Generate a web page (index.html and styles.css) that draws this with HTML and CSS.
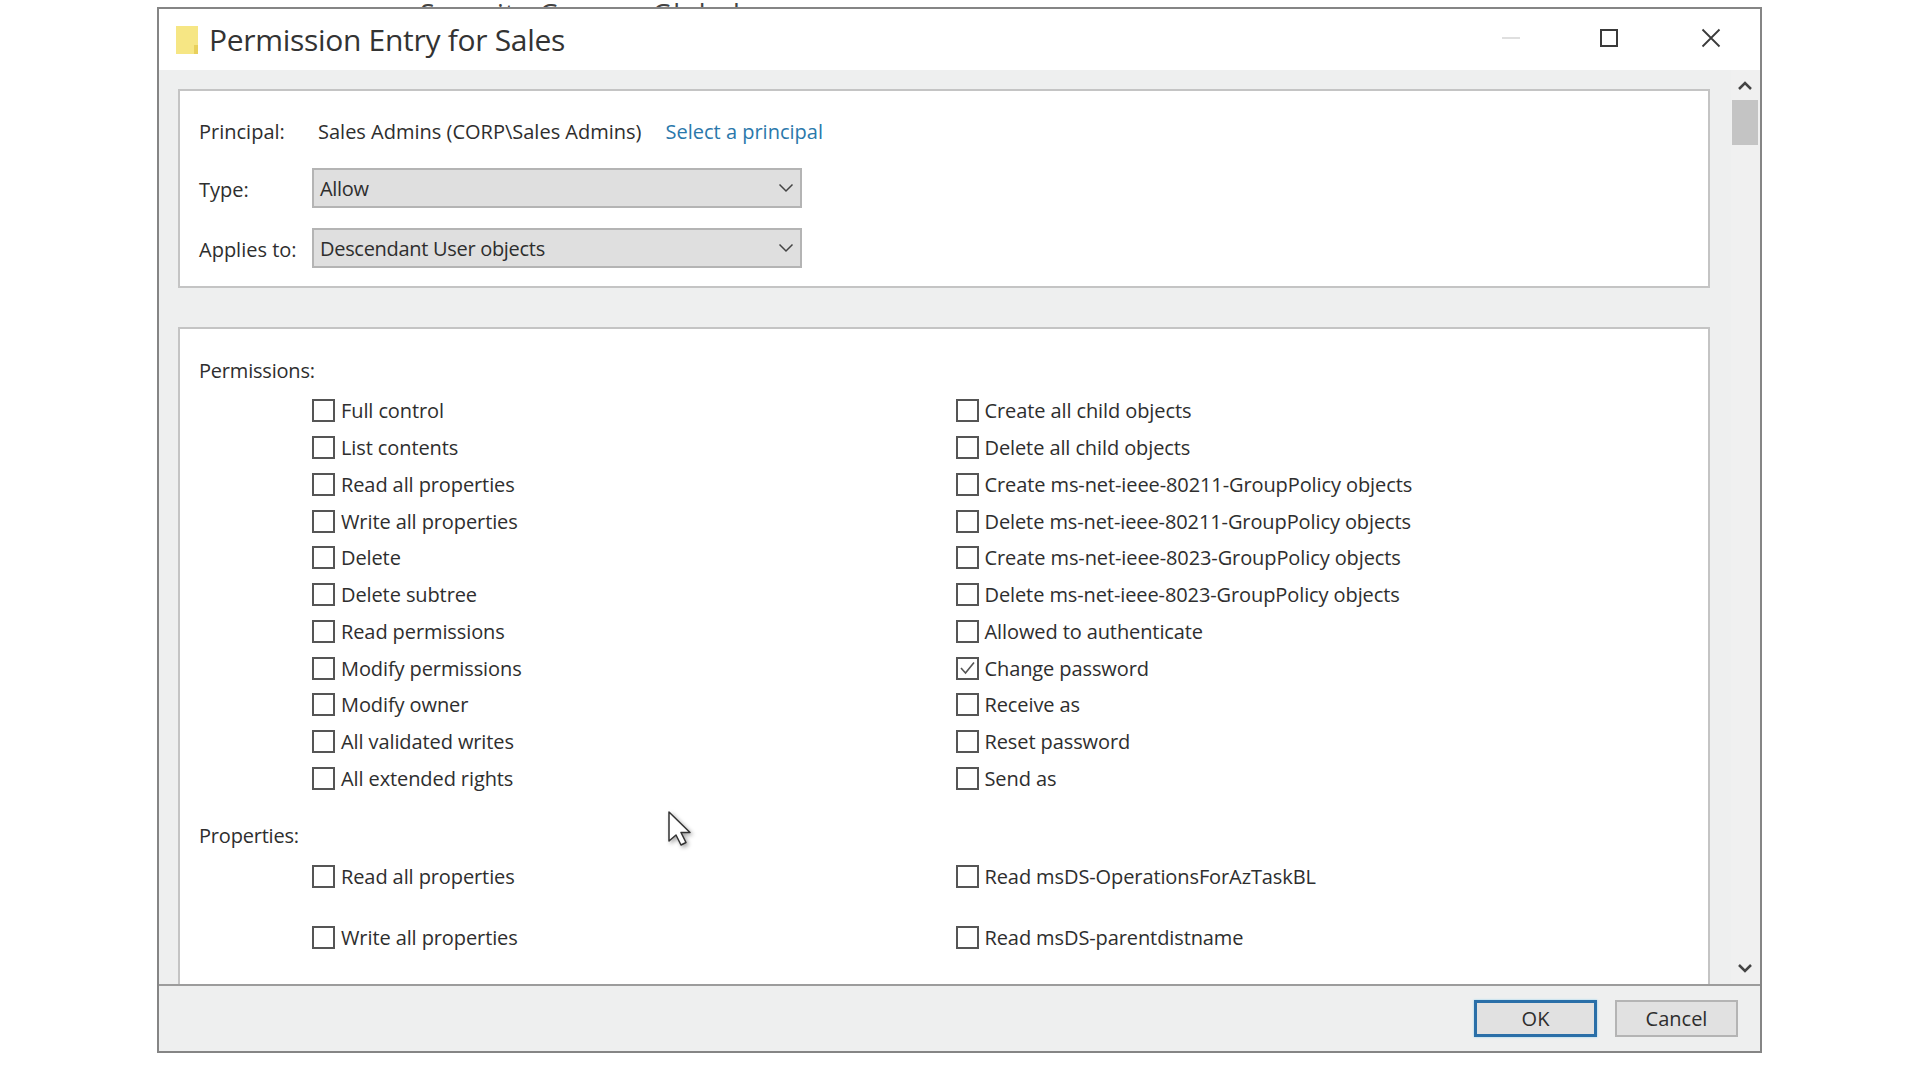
FILE: index.html
```html
<!DOCTYPE html>
<html lang="en">
<head>
<meta charset="utf-8">
<title>Permission Entry for Sales</title>
<link rel="stylesheet" href="styles.css">
</head>
<body>
<div class="behind">Security Group - Global</div>
<div class="window">
  <header class="titlebar">
    <svg class="folder" width="24" height="30" viewBox="0 0 24 30"><rect x="1" y="1" width="22" height="28" fill="#f6e684"/><rect x="19" y="20" width="4" height="9" fill="#e8d05c"/></svg>
    <span class="title">Permission Entry for Sales</span>
    <div class="controls">
      <svg class="ctl" width="24" height="24" viewBox="0 0 24 24"><path d="M3 12h18" stroke="#d4d4d4" stroke-width="1.500"/></svg>
      <svg class="ctl" width="24" height="24" viewBox="0 0 24 24"><rect x="4" y="4" width="16" height="16" fill="none" stroke="#3a3a3a" stroke-width="2"/></svg>
      <svg class="ctl" width="24" height="24" viewBox="0 0 24 24"><path d="M3.500 3.500l17 17M20.500 3.500l-17 17" stroke="#3a3a3a" stroke-width="1.800" fill="none"/></svg>
    </div>
  </header>
  <div class="body">
    <main class="content">
      <section class="panel top">
        <div class="row principal"><span class="lbl">Principal:</span><span class="val">Sales Admins (CORP\Sales Admins)</span><span class="link">Select a principal</span></div>
        <div class="row"><span class="lbl field">Type:</span><div class="select"><span>Allow</span><svg width="16" height="10" viewBox="0 0 16 10"><path d="M1.500 1.500L8 8l6.500-6.500" fill="none" stroke="#444" stroke-width="1.500"/></svg></div></div>
        <div class="row"><span class="lbl field">Applies to:</span><div class="select"><span>Descendant User objects</span><svg width="16" height="10" viewBox="0 0 16 10"><path d="M1.500 1.500L8 8l6.500-6.500" fill="none" stroke="#444" stroke-width="1.500"/></svg></div></div>
      </section>
      <section class="panel perms">
        <div class="head">Permissions:</div>
        <div class="grid">
          <label class="cb"><i></i>Full control</label><label class="cb"><i></i>Create all child objects</label>
          <label class="cb"><i></i>List contents</label><label class="cb"><i></i>Delete all child objects</label>
          <label class="cb"><i></i>Read all properties</label><label class="cb"><i></i>Create ms-net-ieee-80211-GroupPolicy objects</label>
          <label class="cb"><i></i>Write all properties</label><label class="cb"><i></i>Delete ms-net-ieee-80211-GroupPolicy objects</label>
          <label class="cb"><i></i>Delete</label><label class="cb"><i></i>Create ms-net-ieee-8023-GroupPolicy objects</label>
          <label class="cb"><i></i>Delete subtree</label><label class="cb"><i></i>Delete ms-net-ieee-8023-GroupPolicy objects</label>
          <label class="cb"><i></i>Read permissions</label><label class="cb"><i></i>Allowed to authenticate</label>
          <label class="cb"><i></i>Modify permissions</label><label class="cb"><i><svg width="19" height="19" viewBox="0 0 19 19"><path d="M3 9l4.500 5L16 3.500" fill="none" stroke="#555" stroke-width="1.600"/></svg></i>Change password</label>
          <label class="cb"><i></i>Modify owner</label><label class="cb"><i></i>Receive as</label>
          <label class="cb"><i></i>All validated writes</label><label class="cb"><i></i>Reset password</label>
          <label class="cb"><i></i>All extended rights</label><label class="cb"><i></i>Send as</label>
        </div>
        <div class="head props">Properties:</div>
        <div class="grid wide">
          <label class="cb"><i></i>Read all properties</label><label class="cb"><i></i>Read msDS-OperationsForAzTaskBL</label>
          <label class="cb"><i></i>Write all properties</label><label class="cb"><i></i>Read msDS-parentdistname</label>
        </div>
        <svg class="cursor" width="26" height="38" viewBox="0 0 26 38"><path d="M3 2v29l7-6 5 10 5-2.500-5-10h9z" fill="#fff" stroke="#333" stroke-width="1.500" stroke-linejoin="round"/></svg>
      </section>
    </main>
    <aside class="scroll">
      <svg width="18" height="12" viewBox="0 0 18 12"><path d="M3 9l6-6 6 6" fill="none" stroke="#444" stroke-width="2.500"/></svg>
      <div class="thumb"></div>
      <svg class="down" width="18" height="12" viewBox="0 0 18 12"><path d="M3 3l6 6 6-6" fill="none" stroke="#444" stroke-width="2.500"/></svg>
    </aside>
  </div>
  <footer class="foot">
    <button class="btn ok">OK</button>
    <button class="btn">Cancel</button>
  </footer>
</div>
</body>
</html>
```
FILE: styles.css
```css
* { box-sizing: border-box; }
html, body { margin: 0; height: 100%; }
body {
  background: #fff;
  overflow: hidden;
  padding: 7px 0 0 157px;
  font-family: "Open Sans", "Noto Sans", sans-serif;
  color: #2e2e2e;
  position: relative;
}
.behind {
  position: absolute;
  left: 420px;
  top: 0;
  height: 7px;
  overflow: hidden;
  font-size: 27px;
  line-height: 27px;
  color: #444;
  letter-spacing: 1.300px;
  white-space: nowrap;
}
.window {
  position: relative;
  width: 1605px;
  height: 1046px;
  border: 2px solid #858585;
  background: #eeefef;
  display: flex;
  flex-direction: column;
}
.titlebar {
  height: 61px;
  background: #fff;
  display: flex;
  align-items: center;
  padding: 0 0 0 16px;
  flex: none;
}
.folder { margin-right: 10px; }
.title { font-size: 30px; letter-spacing: -0.300px; color: #333; }
.controls { margin-left: auto; margin-bottom: 3px; display: flex; gap: 74px; padding-right: 37px; }
.ctl:last-child { margin-left: 4px; }
.body { flex: 1; display: flex; min-height: 0; border-bottom: 2px solid #9c9c9c; }
.content { flex: none; width: 1572px; padding: 19px 21px 0 19px; display: flex; flex-direction: column; gap: 39px; }
.panel { background: #fff; border: 2px solid #c4c4c4; }
.top { height: 199px; flex: none; padding: 0 19px; display: flex; flex-direction: column; }
.row { display: flex; align-items: center; font-size: 20px; }
.principal { height: 32px; margin: 24.500px 0 20.500px; }
.row + .row + .row { margin-top: 20px; }
.lbl { flex: none; width: 113px; }
.field { padding-top: 3px; }
.val { margin: 0 24px 0 6px; }
.link { color: #2a78ab; }
.select {
  width: 490px;
  height: 40px;
  background: #dfdfdf;
  border: 2px solid #b4b4b4;
  display: flex;
  align-items: center;
  justify-content: space-between;
  padding: 0 6px 0 6px;
  letter-spacing: -0.300px;
}
.perms { position: relative; flex: 1; padding: 27.500px 19px 0; border-bottom: 0; }
.head { font-size: 20px; line-height: 28px; letter-spacing: -0.200px; }
.props { margin-top: 25px; }
.grid { display: grid; grid-template-columns: 643.500px 1fr; grid-auto-rows: 36.750px; padding: 8px 0 0 113px; }
.wide { grid-auto-rows: 61.250px; padding-top: 0; margin-top: -4px; }
.cb { display: flex; align-items: center; font-size: 20px; gap: 6px; letter-spacing: -0.100px; }
.cb i {
  flex: none;
  width: 23px;
  height: 23px;
  border: 2px solid #555;
  display: flex;
  background: #fff;
}
.cursor { position: absolute; left: 486px; top: 481px; filter: drop-shadow(2px 2px 2px rgba(0,0,0,.35)); }
.scroll { flex: 1; display: flex; flex-direction: column; align-items: center; padding: 10px 2px 0 0; background: #f0f0f0; }
.thumb { width: 26px; height: 45px; background: #c4c4c4; margin-top: 8px; }
.down { margin-top: auto; margin-bottom: 10px; }
.foot { flex: none; height: 65px; display: flex; justify-content: flex-end; gap: 18px; padding: 14px 22px 0 0; align-items: flex-start; }
.btn {
  width: 123px;
  height: 37px;
  font: 20px "Open Sans", sans-serif;
  color: #2e2e2e;
  background: #e1e1e1;
  border: 2px solid #b4b4b4;
  padding: 0;
}
.ok { border: 3px solid #2a6fa8; box-shadow: 0 0 2px #8fd0f0; }
```
